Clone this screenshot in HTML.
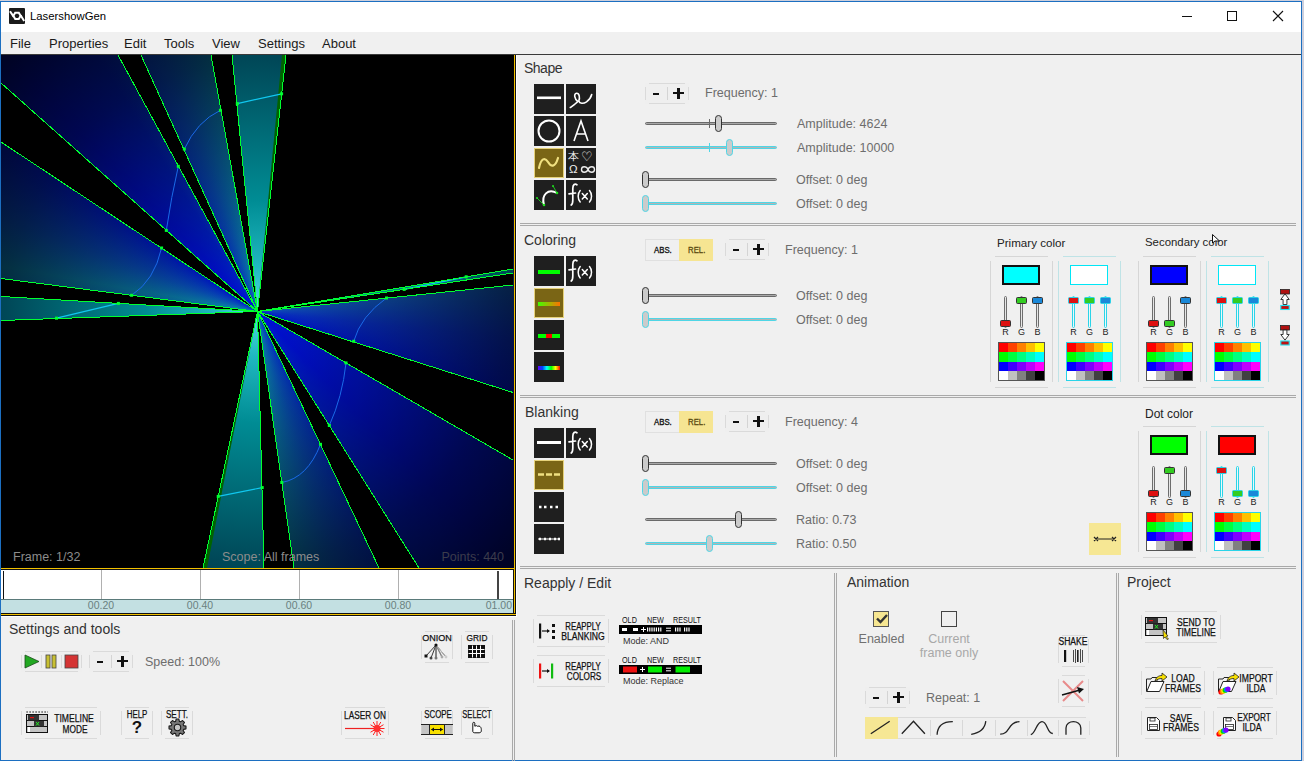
<!DOCTYPE html>
<html><head><meta charset="utf-8">
<style>
html,body{margin:0;padding:0;}
body{width:1304px;height:761px;position:relative;overflow:hidden;background:#cdcfdc;font-family:"Liberation Sans",sans-serif;color:#222;}
div,span{position:absolute;box-sizing:border-box;}
.t{white-space:nowrap;line-height:1;}
.win{left:0;top:1px;width:1302px;height:760px;border:1px solid #1c6fc1;background:#f0f0f0;}
.title{left:1px;top:2px;width:1300px;height:30px;background:#fff;}
.menu{left:1px;top:32px;width:1300px;height:22px;background:#f0f0f0;}
.mi{top:37px;font-size:13px;color:#1a1a1a;}
.sep2{height:3px;border-top:1px solid #a9a9a9;border-bottom:1px solid #a9a9a9;}
.vsep2{width:3px;border-left:1px solid #a9a9a9;border-right:1px solid #a9a9a9;}
.sect{font-size:14px;color:#333;}
.lbl{font-size:12.5px;color:#6a6a6a;}
</style></head><body>
<div class="win"></div>
<div class="title"></div>
<!-- app icon -->
<div style="left:9px;top:8px;width:16px;height:16px;background:#1a1a1a;border-radius:1px;"></div>
<svg style="position:absolute;left:9px;top:8px" width="16" height="16" viewBox="0 0 16 16"><path d="M1 3.3 L4.6 8.6 M11.6 7.2 L15.2 13" stroke="#fff" stroke-width="2" fill="none"/><polygon points="11.60,7.80 9.80,10.92 6.20,10.92 4.40,7.80 6.20,4.68 9.80,4.68" stroke="#fff" stroke-width="2" fill="none"/></svg>
<div class="t" style="left:30px;top:11px;font-size:11.3px;color:#000;">LasershowGen</div>
<!-- window controls -->
<div style="left:1182px;top:16px;width:10px;height:1px;background:#111;"></div>
<div style="left:1227px;top:11px;width:10px;height:10px;border:1px solid #111;"></div>
<svg style="position:absolute;left:1272px;top:10px" width="12" height="12" viewBox="0 0 12 12"><path d="M1 1 L11 11 M11 1 L1 11" stroke="#111" stroke-width="1.1"/></svg>
<div class="menu"></div>
<div class="t mi" style="left:10px;">File</div>
<div class="t mi" style="left:49px;">Properties</div>
<div class="t mi" style="left:124px;">Edit</div>
<div class="t mi" style="left:164px;">Tools</div>
<div class="t mi" style="left:212px;">View</div>
<div class="t mi" style="left:258px;">Settings</div>
<div class="t mi" style="left:322px;">About</div>
<div style="left:1px;top:54px;width:1300px;height:1px;background:#3a3a3a;"></div>
<!-- CANVAS -->
<!--canvas-->
<!-- orange frame -->
<div style="left:514px;top:55px;width:1px;height:560px;background:#f2c100;"></div>
<div style="left:515px;top:55px;width:1px;height:560px;background:#111;"></div>
<div style="left:1px;top:568px;width:514px;height:1px;background:#f2c100;"></div>
<!-- timeline -->
<div style="left:1px;top:569px;width:512px;height:30px;background:#fff;border-top:1px solid #111;"></div>
<div style="left:1px;top:599px;width:512px;height:14px;background:#c3e0e2;border-top:1px solid #5a7a7a;"></div>
<div style="left:513px;top:569px;width:1px;height:45px;background:#111;"></div>
<div style="left:1px;top:613px;width:514px;height:1px;background:#111;"></div>
<div style="left:1px;top:614px;width:515px;height:1px;background:#f2c100;"></div>
<div style="left:1px;top:615px;width:515px;height:1px;background:#111;"></div>
<div style="left:1px;top:616px;width:516px;height:1px;background:#fff;"></div>
<div style="left:516px;top:55px;width:1px;height:562px;background:#fff;"></div>


<div style="left:1px;top:55px;width:513px;height:513px;background:#000;overflow:hidden;">
<div style="left:0;top:0;width:513px;height:513px;background:radial-gradient(circle at 256.5px 256.5px, rgba(0,0,0,0) 0px, rgba(0,0,0,0.1) 50px, rgba(0,0,0,0.3) 130px, rgba(0,0,0,0.62) 250px, rgba(0,0,0,0.86) 370px),conic-gradient(from 0deg at 256.5px 256.5px, #00a0b8 0deg, #0a80b0 10deg, #0850c0 20deg, #0020d0 32deg, #0010d8 45deg, #0020d0 70deg, #1058b8 84deg, #0830c8 96deg, #0018d0 108deg, #0010d8 135deg, #0020d0 150deg, #0850c0 162deg, #0a80b0 172deg, #00a0b8 180deg, #0a80b0 190deg, #0850c0 200deg, #0020d0 212deg, #0010d8 225deg, #0020d0 250deg, #0850c0 262deg, #0a80b0 280deg, #0850c0 290deg, #0020d0 302deg, #0010d8 315deg, #0020d0 328deg, #0850c0 340deg, #0a80b0 350deg, #00a0b8 360deg);"></div>
<svg style="position:absolute;left:0;top:0" width="513" height="513" viewBox="1 55 513 513">
<polygon points="257.5,311.5 1,142 1,83" fill="#000"/>
<polygon points="257.5,311.5 118,55 141,55" fill="#000"/>
<polygon points="257.5,311.5 211,55 232,55" fill="#000"/>
<polygon points="257.5,311.5 286,55 514,54 513,269" fill="#000"/>
<polygon points="257.5,311.5 513,273 513,285" fill="#000"/>
<polygon points="257.5,311.5 513,392.5 513,460" fill="#000"/>
<polygon points="257.5,311.5 419,568 379,568" fill="#000"/>
<polygon points="257.5,311.5 294,568 264,568" fill="#000"/>
<polygon points="257.5,311.5 203,568 0,569 1,320.5" fill="#000"/>
<polygon points="257.5,311.5 1,296.5 1,278.5" fill="#000"/>
<defs><radialGradient id="tg" gradientUnits="userSpaceOnUse" cx="257.5" cy="311.5" r="370"><stop offset="0" stop-color="#50e0e0"/><stop offset="0.12" stop-color="#20b8c0"/><stop offset="0.3" stop-color="#008c94"/><stop offset="0.68" stop-color="#004858"/><stop offset="1" stop-color="#002a38"/></radialGradient></defs>
<polygon points="257.5,311.5 232,55 286,55" fill="url(#tg)"/>
<polygon points="257.5,311.5 513,269 513,273" fill="url(#tg)"/>
<polygon points="257.5,311.5 264,568 203,568" fill="url(#tg)"/>
<polygon points="257.5,311.5 1,320.5 1,296.5" fill="url(#tg)"/>
<polygon points="257.5,311.5 282,55 286,55" fill="#006400"/>
<polygon points="257.5,311.5 203,568 207,568" fill="#006400"/>
<path d="M220.4,110.3 Q197.0,121.3 184.3,149.1" stroke="#1a6ae8" stroke-width="1" fill="none"/>
<path d="M178.3,166.3 Q171.3,196.6 166.3,230.4" stroke="#1a6ae8" stroke-width="1" fill="none"/>
<path d="M161.6,248 Q154.4,280.4 131.6,295.3" stroke="#1a6ae8" stroke-width="1" fill="none"/>
<path d="M386.5,298 Q360.9,316.0 353.7,341.3" stroke="#1a6ae8" stroke-width="1" fill="none"/>
<path d="M346,362.9 Q342.4,396.8 329.3,425.5" stroke="#1a6ae8" stroke-width="1" fill="none"/>
<path d="M320.5,444.3 Q307.6,477.8 281.8,482.5" stroke="#1a6ae8" stroke-width="1" fill="none"/>
<line x1="281.6" y1="93.8" x2="237.3" y2="103.6" stroke="#10c8f0" stroke-width="1.2"/>
<line x1="118.4" y1="303.4" x2="56.5" y2="318.2" stroke="#10c8f0" stroke-width="1.2"/>
<line x1="262.2" y1="487.6" x2="218.2" y2="496.4" stroke="#10c8f0" stroke-width="1.2"/>
<line x1="404.2" y1="289.4" x2="466.2" y2="276.8" stroke="#10c8f0" stroke-width="1.2"/>
<line x1="257.5" y1="311.5" x2="1" y2="83" stroke="#00ff30" stroke-width="1" shape-rendering="crispEdges"/>
<line x1="257.5" y1="311.5" x2="118" y2="55" stroke="#00ff30" stroke-width="1" shape-rendering="crispEdges"/>
<line x1="257.5" y1="311.5" x2="141" y2="55" stroke="#00ff30" stroke-width="1" shape-rendering="crispEdges"/>
<line x1="257.5" y1="311.5" x2="211" y2="55" stroke="#00ff30" stroke-width="1" shape-rendering="crispEdges"/>
<line x1="257.5" y1="311.5" x2="232" y2="55" stroke="#00ff30" stroke-width="1" shape-rendering="crispEdges"/>
<line x1="257.5" y1="311.5" x2="286" y2="55" stroke="#00ff30" stroke-width="1" shape-rendering="crispEdges"/>
<line x1="257.5" y1="311.5" x2="513" y2="269" stroke="#00ff30" stroke-width="1" shape-rendering="crispEdges"/>
<line x1="257.5" y1="311.5" x2="513" y2="273" stroke="#00ff30" stroke-width="1" shape-rendering="crispEdges"/>
<line x1="257.5" y1="311.5" x2="513" y2="285" stroke="#00ff30" stroke-width="1" shape-rendering="crispEdges"/>
<line x1="257.5" y1="311.5" x2="513" y2="392.5" stroke="#00ff30" stroke-width="1" shape-rendering="crispEdges"/>
<line x1="257.5" y1="311.5" x2="513" y2="460" stroke="#00ff30" stroke-width="1" shape-rendering="crispEdges"/>
<line x1="257.5" y1="311.5" x2="419" y2="568" stroke="#00ff30" stroke-width="1" shape-rendering="crispEdges"/>
<line x1="257.5" y1="311.5" x2="379" y2="568" stroke="#00ff30" stroke-width="1" shape-rendering="crispEdges"/>
<line x1="257.5" y1="311.5" x2="294" y2="568" stroke="#00ff30" stroke-width="1" shape-rendering="crispEdges"/>
<line x1="257.5" y1="311.5" x2="264" y2="568" stroke="#00ff30" stroke-width="1" shape-rendering="crispEdges"/>
<line x1="257.5" y1="311.5" x2="203" y2="568" stroke="#00ff30" stroke-width="1" shape-rendering="crispEdges"/>
<line x1="257.5" y1="311.5" x2="1" y2="320.5" stroke="#00ff30" stroke-width="1" shape-rendering="crispEdges"/>
<line x1="257.5" y1="311.5" x2="1" y2="296.5" stroke="#00ff30" stroke-width="1" shape-rendering="crispEdges"/>
<line x1="257.5" y1="311.5" x2="1" y2="278.5" stroke="#00ff30" stroke-width="1" shape-rendering="crispEdges"/>
<line x1="257.5" y1="311.5" x2="1" y2="142" stroke="#00ff30" stroke-width="1" shape-rendering="crispEdges"/>
<rect x="280.1" y="92.3" width="3" height="3" fill="#00ff30"/>
<rect x="235.8" y="102.1" width="3" height="3" fill="#00ff30"/>
<rect x="218.9" y="108.8" width="3" height="3" fill="#00ff30"/>
<rect x="182.8" y="147.6" width="3" height="3" fill="#00ff30"/>
<rect x="176.8" y="164.8" width="3" height="3" fill="#00ff30"/>
<rect x="164.8" y="228.9" width="3" height="3" fill="#00ff30"/>
<rect x="160.1" y="246.5" width="3" height="3" fill="#00ff30"/>
<rect x="130.1" y="293.8" width="3" height="3" fill="#00ff30"/>
<rect x="116.9" y="301.9" width="3" height="3" fill="#00ff30"/>
<rect x="55.0" y="316.7" width="3" height="3" fill="#00ff30"/>
<rect x="385.0" y="296.5" width="3" height="3" fill="#00ff30"/>
<rect x="352.2" y="339.8" width="3" height="3" fill="#00ff30"/>
<rect x="344.5" y="361.4" width="3" height="3" fill="#00ff30"/>
<rect x="327.8" y="424.0" width="3" height="3" fill="#00ff30"/>
<rect x="319.0" y="442.8" width="3" height="3" fill="#00ff30"/>
<rect x="280.3" y="481.0" width="3" height="3" fill="#00ff30"/>
<rect x="260.7" y="486.1" width="3" height="3" fill="#00ff30"/>
<rect x="216.7" y="494.9" width="3" height="3" fill="#00ff30"/>
<rect x="402.7" y="287.9" width="3" height="3" fill="#00ff30"/>
<rect x="464.7" y="275.3" width="3" height="3" fill="#00ff30"/>
</svg></div>
<div style="left:516px;top:55px;width:1px;height:512px;background:#fff;"></div>
<div style="left:520px;top:223px;width:776px;height:1px;background:#a9a9a9;"></div>
<div style="left:520px;top:225px;width:776px;height:1px;background:#a9a9a9;"></div>
<div style="left:520px;top:395px;width:776px;height:1px;background:#a9a9a9;"></div>
<div style="left:520px;top:397px;width:776px;height:1px;background:#a9a9a9;"></div>
<div style="left:520px;top:566px;width:776px;height:1px;background:#a9a9a9;"></div>
<div style="left:520px;top:568px;width:776px;height:1px;background:#a9a9a9;"></div>
<div style="left:512px;top:620px;width:1px;height:184px;background:#a9a9a9;"></div>
<div style="left:514px;top:620px;width:1px;height:184px;background:#a9a9a9;"></div>
<div style="left:834px;top:573px;width:1px;height:184px;background:#a9a9a9;"></div>
<div style="left:836px;top:573px;width:1px;height:184px;background:#a9a9a9;"></div>
<div style="left:1116px;top:573px;width:1px;height:184px;background:#a9a9a9;"></div>
<div style="left:1118px;top:573px;width:1px;height:184px;background:#a9a9a9;"></div>
<div class="t" style="left:524px;top:60.76px;font-size:14px;color:#333;letter-spacing:-0.5px;">Shape</div>
<div class="t" style="left:524px;top:232.76px;font-size:14px;color:#333;">Coloring</div>
<div class="t" style="left:525px;top:404.76px;font-size:14px;color:#333;">Blanking</div>
<div class="t" style="left:524px;top:575.76px;font-size:14px;color:#333;">Reapply / Edit</div>
<div class="t" style="left:847px;top:574.76px;font-size:14px;color:#333;">Animation</div>
<div class="t" style="left:1127px;top:574.76px;font-size:14px;color:#333;">Project</div>
<div class="t" style="left:9px;top:622.26px;font-size:14px;color:#333;">Settings and tools</div>
<div style="left:534px;top:84px;width:30px;height:30px;background:#1f1f1f;"><svg style="position:absolute;left:0px;top:0px" width="30" height="30" viewBox="0 0 30 30"><rect x="3" y="12.5" width="24" height="2.6" fill="#fff"/></svg></div>
<div style="left:566px;top:84px;width:30px;height:30px;background:#1f1f1f;"><svg style="position:absolute;left:0px;top:0px" width="30" height="30" viewBox="0 0 30 30"><path d="M4.3 23.5 C7 21.5 10 19.5 11.8 17.5 C8.5 15 7.5 9.5 10.5 9.3 C13.5 9.1 14 14 12.8 17 C13.5 19.8 17.5 19.8 20.5 17.8 C23 16 25 13.5 25.7 10.5" stroke="#fff" stroke-width="1.6" fill="none" stroke-linecap="round"/></svg></div>
<div style="left:534px;top:116px;width:30px;height:30px;background:#1f1f1f;"><svg style="position:absolute;left:0px;top:0px" width="30" height="30" viewBox="0 0 30 30"><circle cx="15" cy="15" r="10.5" stroke="#fff" stroke-width="2" fill="none"/></svg></div>
<div style="left:566px;top:116px;width:30px;height:30px;background:#1f1f1f;"><svg style="position:absolute;left:0px;top:0px" width="30" height="30" viewBox="0 0 30 30"><path d="M8 25 L15 5 L22 25 M10.5 18 L19.5 18" stroke="#fff" stroke-width="1.6" fill="none"/></svg></div>
<div style="left:534px;top:148px;width:30px;height:30px;background:#7a6515;border:1px solid #e6d27a;"><svg style="position:absolute;left:0px;top:0px" width="28" height="28" viewBox="0 0 28 28"><path d="M4 19 C6 9 10 8 13 13 C16 18 20 19 23 9" stroke="#f0e080" stroke-width="2.2" fill="none" stroke-linecap="round"/></svg></div>
<div style="left:566px;top:148px;width:30px;height:30px;background:#1f1f1f;"><div class="t" style="left:2px;top:2.5px;font-size:11px;color:#eee;">本</div><div class="t" style="left:15px;top:2px;font-size:13px;color:#eee;">♡</div><div class="t" style="left:3px;top:16px;font-size:11.5px;color:#eee;">Ω</div><svg style="position:absolute;left:0;top:0" width="30" height="30"><path d="M15.5 21.5 C15.5 17.8 20.5 17.8 22 21.5 C23.5 25.2 28.5 25.2 28.5 21.5 C28.5 17.8 23.5 17.8 22 21.5 C20.5 25.2 15.5 25.2 15.5 21.5 Z" stroke="#eee" stroke-width="1.4" fill="none"/></svg></div>
<div style="left:534px;top:180px;width:30px;height:30px;background:#1f1f1f;"><svg style="position:absolute;left:0px;top:0px" width="30" height="30" viewBox="0 0 30 30"><path d="M10 25 C7 15 14 8 23 13" stroke="#fff" stroke-width="2" fill="none"/><path d="M3 18 L10 25 M19 6 L23 13" stroke="#1ec01e" stroke-width="1"/><circle cx="10" cy="25" r="1.3" fill="#1ee01e"/><circle cx="23" cy="13" r="1.3" fill="#1ee01e"/><circle cx="3" cy="18" r="1" fill="#1ee01e"/><circle cx="19" cy="6" r="1" fill="#1ee01e"/></svg></div>
<div style="left:566px;top:180px;width:30px;height:30px;background:#1f1f1f;"><svg style="position:absolute;left:0px;top:0px" width="30" height="30" viewBox="0 0 30 30"><path d="M11 4.8 C9 3 6.8 4.5 6.8 8.5 L6.8 20 C6.8 23 6 24.5 5.2 25 M3 13.8 L9.5 13" stroke="#fff" stroke-width="1.7" fill="none" stroke-linecap="round"/><path d="M14.2 10.5 C11.5 13.5 11.5 19 14.2 22 M23.5 10.5 C26.2 13.5 26.2 19 23.5 22 M16.3 13.5 L21.3 19 M21.3 13.5 L16.3 19" stroke="#fff" stroke-width="1.5" fill="none" stroke-linecap="round"/></svg></div>
<div style="left:534px;top:256px;width:30px;height:30px;background:#1f1f1f;"><div style="left:4px;top:14px;width:22px;height:4px;background:#00ff00;"></div></div>
<div style="left:566px;top:256px;width:30px;height:30px;background:#1f1f1f;"><svg style="position:absolute;left:0px;top:0px" width="30" height="30" viewBox="0 0 30 30"><path d="M11 4.8 C9 3 6.8 4.5 6.8 8.5 L6.8 20 C6.8 23 6 24.5 5.2 25 M3 13.8 L9.5 13" stroke="#fff" stroke-width="1.7" fill="none" stroke-linecap="round"/><path d="M14.2 10.5 C11.5 13.5 11.5 19 14.2 22 M23.5 10.5 C26.2 13.5 26.2 19 23.5 22 M16.3 13.5 L21.3 19 M21.3 13.5 L16.3 19" stroke="#fff" stroke-width="1.5" fill="none" stroke-linecap="round"/></svg></div>
<div style="left:534px;top:288px;width:30px;height:30px;background:#7a6515;border:1px solid #e6d27a;"><div style="left:3px;top:13px;width:22px;height:4px;background:linear-gradient(90deg,#40ff00,#ff7000);"></div></div>
<div style="left:534px;top:320px;width:30px;height:30px;background:#1f1f1f;"><div style="left:4px;top:14px;width:22px;height:4px;background:linear-gradient(90deg,#00ff00 0 36%,#ff0000 36% 64%,#00ff00 64%);"></div></div>
<div style="left:534px;top:352px;width:30px;height:30px;background:#1f1f1f;"><div style="left:4px;top:14px;width:22px;height:4px;background:linear-gradient(90deg,#6000ff,#0040ff,#00ffff,#00ff00,#ffff00,#ff0000);"></div></div>
<div style="left:534px;top:428px;width:30px;height:30px;background:#1f1f1f;"><div style="left:3px;top:13px;width:24px;height:3px;background:#fff;"></div></div>
<div style="left:566px;top:428px;width:30px;height:30px;background:#1f1f1f;"><svg style="position:absolute;left:0px;top:0px" width="30" height="30" viewBox="0 0 30 30"><path d="M11 4.8 C9 3 6.8 4.5 6.8 8.5 L6.8 20 C6.8 23 6 24.5 5.2 25 M3 13.8 L9.5 13" stroke="#fff" stroke-width="1.7" fill="none" stroke-linecap="round"/><path d="M14.2 10.5 C11.5 13.5 11.5 19 14.2 22 M23.5 10.5 C26.2 13.5 26.2 19 23.5 22 M16.3 13.5 L21.3 19 M21.3 13.5 L16.3 19" stroke="#fff" stroke-width="1.5" fill="none" stroke-linecap="round"/></svg></div>
<div style="left:534px;top:460px;width:30px;height:30px;background:#7a6515;border:1px solid #e6d27a;"><svg style="position:absolute;left:0px;top:0px" width="28" height="28" viewBox="0 0 28 28"><path d="M3 13.5 L9 13.5 M11 13.5 L17 13.5 M19 13.5 L25 13.5" stroke="#f0e080" stroke-width="2.6"/></svg></div>
<div style="left:534px;top:492px;width:30px;height:30px;background:#1f1f1f;"><svg style="position:absolute;left:0px;top:0px" width="30" height="30" viewBox="0 0 30 30"><path d="M5 15 L7.5 15 M10 15 L12.5 15 M16 15 L18.5 15 M21.5 15 L24 15" stroke="#fff" stroke-width="2.4"/></svg></div>
<div style="left:534px;top:524px;width:30px;height:30px;background:#1f1f1f;"><svg style="position:absolute;left:0px;top:0px" width="30" height="30" viewBox="0 0 30 30"><path d="M4 15 L26 15" stroke="#fff" stroke-width="1"/><path d="M5 15 L7 15 M10 15 L12 15 M15 15 L17 15 M20 15 L22 15 M24 15 L26 15" stroke="#fff" stroke-width="2.6"/></svg></div>
<div style="left:645px;top:122px;width:132px;height:3px;background:#a8a8a8;border:1px solid #6a6a6a;border-radius:1.5px;"></div>
<div style="left:709px;top:119px;width:1px;height:9px;background:#6a6a6a;"></div>
<div style="left:715px;top:115px;width:7px;height:17px;background:#cbcbcb;border:1px solid #333;border-radius:3.5px;"></div>
<div style="left:645px;top:146px;width:132px;height:3px;background:#b4b4b4;border:1px solid #4fd6e6;border-radius:1.5px;"></div>
<div style="left:709px;top:143px;width:1px;height:9px;background:#4fd6e6;"></div>
<div style="left:726px;top:139px;width:7px;height:17px;background:#cbcbcb;border:1px solid #4fd6e6;border-radius:3.5px;"></div>
<div style="left:645px;top:178px;width:132px;height:3px;background:#a8a8a8;border:1px solid #6a6a6a;border-radius:1.5px;"></div>
<div style="left:642px;top:171px;width:7px;height:17px;background:#cbcbcb;border:1px solid #333;border-radius:3.5px;"></div>
<div style="left:645px;top:202px;width:132px;height:3px;background:#b4b4b4;border:1px solid #4fd6e6;border-radius:1.5px;"></div>
<div style="left:642px;top:195px;width:7px;height:17px;background:#cbcbcb;border:1px solid #4fd6e6;border-radius:3.5px;"></div>
<div style="left:645px;top:294px;width:132px;height:3px;background:#a8a8a8;border:1px solid #6a6a6a;border-radius:1.5px;"></div>
<div style="left:642px;top:287px;width:7px;height:17px;background:#cbcbcb;border:1px solid #333;border-radius:3.5px;"></div>
<div style="left:645px;top:318px;width:132px;height:3px;background:#b4b4b4;border:1px solid #4fd6e6;border-radius:1.5px;"></div>
<div style="left:642px;top:311px;width:7px;height:17px;background:#cbcbcb;border:1px solid #4fd6e6;border-radius:3.5px;"></div>
<div style="left:645px;top:462px;width:132px;height:3px;background:#a8a8a8;border:1px solid #6a6a6a;border-radius:1.5px;"></div>
<div style="left:642px;top:455px;width:7px;height:17px;background:#cbcbcb;border:1px solid #333;border-radius:3.5px;"></div>
<div style="left:645px;top:486px;width:132px;height:3px;background:#b4b4b4;border:1px solid #4fd6e6;border-radius:1.5px;"></div>
<div style="left:642px;top:479px;width:7px;height:17px;background:#cbcbcb;border:1px solid #4fd6e6;border-radius:3.5px;"></div>
<div style="left:645px;top:518px;width:132px;height:3px;background:#a8a8a8;border:1px solid #6a6a6a;border-radius:1.5px;"></div>
<div style="left:735px;top:511px;width:7px;height:17px;background:#cbcbcb;border:1px solid #333;border-radius:3.5px;"></div>
<div style="left:645px;top:542px;width:132px;height:3px;background:#b4b4b4;border:1px solid #4fd6e6;border-radius:1.5px;"></div>
<div style="left:706px;top:535px;width:7px;height:17px;background:#cbcbcb;border:1px solid #4fd6e6;border-radius:3.5px;"></div>
<div class="t" style="left:705px;top:86.53px;font-size:12.5px;color:#6d6d6d;">Frequency: 1</div>
<div class="t" style="left:797px;top:117.53px;font-size:12.5px;color:#6d6d6d;">Amplitude: 4624</div>
<div class="t" style="left:797px;top:141.53px;font-size:12.5px;color:#6d6d6d;">Amplitude: 10000</div>
<div class="t" style="left:796px;top:173.53px;font-size:12.5px;color:#6d6d6d;">Offset: 0 deg</div>
<div class="t" style="left:796px;top:197.53px;font-size:12.5px;color:#6d6d6d;">Offset: 0 deg</div>
<div class="t" style="left:785px;top:243.53px;font-size:12.5px;color:#6d6d6d;">Frequency: 1</div>
<div class="t" style="left:796px;top:289.52px;font-size:12.5px;color:#6d6d6d;">Offset: 0 deg</div>
<div class="t" style="left:796px;top:313.52px;font-size:12.5px;color:#6d6d6d;">Offset: 0 deg</div>
<div class="t" style="left:785px;top:415.52px;font-size:12.5px;color:#6d6d6d;">Frequency: 4</div>
<div class="t" style="left:796px;top:457.52px;font-size:12.5px;color:#6d6d6d;">Offset: 0 deg</div>
<div class="t" style="left:796px;top:481.52px;font-size:12.5px;color:#6d6d6d;">Offset: 0 deg</div>
<div class="t" style="left:796px;top:513.52px;font-size:12.5px;color:#6d6d6d;">Ratio: 0.73</div>
<div class="t" style="left:796px;top:537.52px;font-size:12.5px;color:#6d6d6d;">Ratio: 0.50</div>
<div style="left:645px;top:83px;width:44px;height:21px;background:#efefef;"><div style="left:4px;top:0;width:36px;height:1px;background:#dadada;"></div><div style="left:4px;top:20px;width:36px;height:1px;background:#dadada;"></div><div style="left:0;top:4px;width:1px;height:13px;background:#dadada;"></div><div style="left:43px;top:4px;width:1px;height:13px;background:#dadada;"></div><div style="left:22px;top:4px;width:1px;height:13px;background:#d4d4d4;"></div><div style="left:8px;top:9.5px;width:6px;height:2px;background:#111;"></div><div style="left:28px;top:9px;width:11px;height:2.2px;background:#111;"></div><div style="left:32.4px;top:5px;width:2.2px;height:11px;background:#111;"></div></div>
<div style="left:725px;top:239px;width:44px;height:21px;background:#efefef;"><div style="left:4px;top:0;width:36px;height:1px;background:#dadada;"></div><div style="left:4px;top:20px;width:36px;height:1px;background:#dadada;"></div><div style="left:0;top:4px;width:1px;height:13px;background:#dadada;"></div><div style="left:43px;top:4px;width:1px;height:13px;background:#dadada;"></div><div style="left:22px;top:4px;width:1px;height:13px;background:#d4d4d4;"></div><div style="left:8px;top:9.5px;width:6px;height:2px;background:#111;"></div><div style="left:28px;top:9px;width:11px;height:2.2px;background:#111;"></div><div style="left:32.4px;top:5px;width:2.2px;height:11px;background:#111;"></div></div>
<div style="left:725px;top:411px;width:44px;height:21px;background:#efefef;"><div style="left:4px;top:0;width:36px;height:1px;background:#dadada;"></div><div style="left:4px;top:20px;width:36px;height:1px;background:#dadada;"></div><div style="left:0;top:4px;width:1px;height:13px;background:#dadada;"></div><div style="left:43px;top:4px;width:1px;height:13px;background:#dadada;"></div><div style="left:22px;top:4px;width:1px;height:13px;background:#d4d4d4;"></div><div style="left:8px;top:9.5px;width:6px;height:2px;background:#111;"></div><div style="left:28px;top:9px;width:11px;height:2.2px;background:#111;"></div><div style="left:32.4px;top:5px;width:2.2px;height:11px;background:#111;"></div></div>
<div style="left:645px;top:239px;width:68px;height:22px;"><div style="left:0;top:0;width:34px;height:22px;border:1px solid #e0e0e0;border-right:none;"></div><div style="left:34px;top:0;width:34px;height:22px;background:#f6e592;"></div><div class="t" style="left:8.5px;top:5.5px;font-size:9.5px;color:#111;transform:scaleX(0.82);transform-origin:0 0;-webkit-text-stroke:0.35px #111;">ABS.</div><div class="t" style="left:42.5px;top:5.5px;font-size:9.5px;color:#5a4a10;transform:scaleX(0.82);transform-origin:0 0;-webkit-text-stroke:0.3px #5a4a10;">REL.</div></div>
<div style="left:645px;top:411px;width:68px;height:22px;"><div style="left:0;top:0;width:34px;height:22px;border:1px solid #e0e0e0;border-right:none;"></div><div style="left:34px;top:0;width:34px;height:22px;background:#f6e592;"></div><div class="t" style="left:8.5px;top:5.5px;font-size:9.5px;color:#111;transform:scaleX(0.82);transform-origin:0 0;-webkit-text-stroke:0.35px #111;">ABS.</div><div class="t" style="left:42.5px;top:5.5px;font-size:9.5px;color:#5a4a10;transform:scaleX(0.82);transform-origin:0 0;-webkit-text-stroke:0.3px #5a4a10;">REL.</div></div>
<div class="t" style="left:997px;top:237.02px;font-size:11.6px;color:#222;">Primary color</div>
<div class="t" style="left:1145px;top:237.13px;font-size:11.4px;color:#222;">Secondary color</div>
<div class="t" style="left:1145px;top:407.80px;font-size:12px;color:#222;">Dot color</div>
<div style="left:995px;top:256px;width:53px;height:1px;background:#d6d6d6;"></div>
<div style="left:995px;top:387px;width:53px;height:1px;background:#d6d6d6;"></div>
<div style="left:990px;top:261px;width:1px;height:121px;background:#d6d6d6;"></div>
<div style="left:1052px;top:261px;width:1px;height:121px;background:#d6d6d6;"></div>
<div style="left:1002px;top:265px;width:38px;height:20px;background:#00ffff;border:2px solid #111;"></div>
<div style="left:1004px;top:296px;width:3px;height:32px;background:#e6e6e6;border:1px solid #6e6e6e;border-radius:1.5px;"></div>
<div style="left:999.5px;top:320px;width:11px;height:6.5px;background:#dd1111;border:1px solid #333;border-radius:1.5px;"></div>
<div class="t" style="left:905.5px;width:200px;text-align:center;top:328.45px;font-size:9px;color:#222;">R</div>
<div style="left:1020px;top:296px;width:3px;height:32px;background:#e6e6e6;border:1px solid #6e6e6e;border-radius:1.5px;"></div>
<div style="left:1015.5px;top:297px;width:11px;height:6.5px;background:#33cc22;border:1px solid #333;border-radius:1.5px;"></div>
<div class="t" style="left:921.5px;width:200px;text-align:center;top:328.45px;font-size:9px;color:#222;">G</div>
<div style="left:1036px;top:296px;width:3px;height:32px;background:#e6e6e6;border:1px solid #6e6e6e;border-radius:1.5px;"></div>
<div style="left:1031.5px;top:297px;width:11px;height:6.5px;background:#1a88d8;border:1px solid #333;border-radius:1.5px;"></div>
<div class="t" style="left:937.5px;width:200px;text-align:center;top:328.45px;font-size:9px;color:#222;">B</div>
<div style="left:998px;top:342px;width:47px;height:39px;border:1px solid #555;"><div style="left:0;top:0;width:45px;height:37px;overflow:hidden;"><div style="left:0px;top:0.00px;width:9px;height:9.3px;background:#ff0000;"></div><div style="left:9px;top:0.00px;width:9px;height:9.3px;background:#ff4000;"></div><div style="left:18px;top:0.00px;width:9px;height:9.3px;background:#ff8000;"></div><div style="left:27px;top:0.00px;width:9px;height:9.3px;background:#ffc000;"></div><div style="left:36px;top:0.00px;width:9px;height:9.3px;background:#ffff00;"></div><div style="left:0px;top:9.25px;width:9px;height:9.3px;background:#00ff00;"></div><div style="left:9px;top:9.25px;width:9px;height:9.3px;background:#00ff40;"></div><div style="left:18px;top:9.25px;width:9px;height:9.3px;background:#00ff80;"></div><div style="left:27px;top:9.25px;width:9px;height:9.3px;background:#00ffc0;"></div><div style="left:36px;top:9.25px;width:9px;height:9.3px;background:#00ffff;"></div><div style="left:0px;top:18.50px;width:9px;height:9.3px;background:#0000ff;"></div><div style="left:9px;top:18.50px;width:9px;height:9.3px;background:#4000ff;"></div><div style="left:18px;top:18.50px;width:9px;height:9.3px;background:#8000ff;"></div><div style="left:27px;top:18.50px;width:9px;height:9.3px;background:#c000ff;"></div><div style="left:36px;top:18.50px;width:9px;height:9.3px;background:#ff00ff;"></div><div style="left:0px;top:27.75px;width:9px;height:9.3px;background:#ffffff;"></div><div style="left:9px;top:27.75px;width:9px;height:9.3px;background:#c0c0c0;"></div><div style="left:18px;top:27.75px;width:9px;height:9.3px;background:#808080;"></div><div style="left:27px;top:27.75px;width:9px;height:9.3px;background:#404040;"></div><div style="left:36px;top:27.75px;width:9px;height:9.3px;background:#000000;"></div></div></div>
<div style="left:1063px;top:256px;width:53px;height:1px;background:#bfe3e6;"></div>
<div style="left:1063px;top:387px;width:53px;height:1px;background:#bfe3e6;"></div>
<div style="left:1058px;top:261px;width:1px;height:121px;background:#bfe3e6;"></div>
<div style="left:1120px;top:261px;width:1px;height:121px;background:#bfe3e6;"></div>
<div style="left:1070px;top:265px;width:38px;height:20px;background:#ffffff;border:1.5px solid #00e6f6;"></div>
<div style="left:1072px;top:296px;width:3px;height:32px;background:#eaf8fa;border:1px solid #2ad4e8;border-radius:1.5px;"></div>
<div style="left:1067.5px;top:297px;width:11px;height:6.5px;background:#dd1111;border:1px solid #2ad4e8;border-radius:1.5px;"></div>
<div class="t" style="left:973.5px;width:200px;text-align:center;top:328.45px;font-size:9px;color:#222;">R</div>
<div style="left:1088px;top:296px;width:3px;height:32px;background:#eaf8fa;border:1px solid #2ad4e8;border-radius:1.5px;"></div>
<div style="left:1083.5px;top:297px;width:11px;height:6.5px;background:#33cc22;border:1px solid #2ad4e8;border-radius:1.5px;"></div>
<div class="t" style="left:989.5px;width:200px;text-align:center;top:328.45px;font-size:9px;color:#222;">G</div>
<div style="left:1104px;top:296px;width:3px;height:32px;background:#eaf8fa;border:1px solid #2ad4e8;border-radius:1.5px;"></div>
<div style="left:1099.5px;top:297px;width:11px;height:6.5px;background:#1a88d8;border:1px solid #2ad4e8;border-radius:1.5px;"></div>
<div class="t" style="left:1005.5px;width:200px;text-align:center;top:328.45px;font-size:9px;color:#222;">B</div>
<div style="left:1066px;top:342px;width:47px;height:39px;border:1px solid #2ad4e8;"><div style="left:0;top:0;width:45px;height:37px;overflow:hidden;"><div style="left:0px;top:0.00px;width:9px;height:9.3px;background:#ff0000;"></div><div style="left:9px;top:0.00px;width:9px;height:9.3px;background:#ff4000;"></div><div style="left:18px;top:0.00px;width:9px;height:9.3px;background:#ff8000;"></div><div style="left:27px;top:0.00px;width:9px;height:9.3px;background:#ffc000;"></div><div style="left:36px;top:0.00px;width:9px;height:9.3px;background:#ffff00;"></div><div style="left:0px;top:9.25px;width:9px;height:9.3px;background:#00ff00;"></div><div style="left:9px;top:9.25px;width:9px;height:9.3px;background:#00ff40;"></div><div style="left:18px;top:9.25px;width:9px;height:9.3px;background:#00ff80;"></div><div style="left:27px;top:9.25px;width:9px;height:9.3px;background:#00ffc0;"></div><div style="left:36px;top:9.25px;width:9px;height:9.3px;background:#00ffff;"></div><div style="left:0px;top:18.50px;width:9px;height:9.3px;background:#0000ff;"></div><div style="left:9px;top:18.50px;width:9px;height:9.3px;background:#4000ff;"></div><div style="left:18px;top:18.50px;width:9px;height:9.3px;background:#8000ff;"></div><div style="left:27px;top:18.50px;width:9px;height:9.3px;background:#c000ff;"></div><div style="left:36px;top:18.50px;width:9px;height:9.3px;background:#ff00ff;"></div><div style="left:0px;top:27.75px;width:9px;height:9.3px;background:#ffffff;"></div><div style="left:9px;top:27.75px;width:9px;height:9.3px;background:#c0c0c0;"></div><div style="left:18px;top:27.75px;width:9px;height:9.3px;background:#808080;"></div><div style="left:27px;top:27.75px;width:9px;height:9.3px;background:#404040;"></div><div style="left:36px;top:27.75px;width:9px;height:9.3px;background:#000000;"></div></div></div>
<div style="left:1143px;top:256px;width:53px;height:1px;background:#d6d6d6;"></div>
<div style="left:1143px;top:387px;width:53px;height:1px;background:#d6d6d6;"></div>
<div style="left:1138px;top:261px;width:1px;height:121px;background:#d6d6d6;"></div>
<div style="left:1200px;top:261px;width:1px;height:121px;background:#d6d6d6;"></div>
<div style="left:1150px;top:265px;width:38px;height:20px;background:#0000ff;border:2px solid #111;"></div>
<div style="left:1152px;top:296px;width:3px;height:32px;background:#e6e6e6;border:1px solid #6e6e6e;border-radius:1.5px;"></div>
<div style="left:1147.5px;top:320px;width:11px;height:6.5px;background:#dd1111;border:1px solid #333;border-radius:1.5px;"></div>
<div class="t" style="left:1053.5px;width:200px;text-align:center;top:328.45px;font-size:9px;color:#222;">R</div>
<div style="left:1168px;top:296px;width:3px;height:32px;background:#e6e6e6;border:1px solid #6e6e6e;border-radius:1.5px;"></div>
<div style="left:1163.5px;top:320px;width:11px;height:6.5px;background:#33cc22;border:1px solid #333;border-radius:1.5px;"></div>
<div class="t" style="left:1069.5px;width:200px;text-align:center;top:328.45px;font-size:9px;color:#222;">G</div>
<div style="left:1184px;top:296px;width:3px;height:32px;background:#e6e6e6;border:1px solid #6e6e6e;border-radius:1.5px;"></div>
<div style="left:1179.5px;top:297px;width:11px;height:6.5px;background:#1a88d8;border:1px solid #333;border-radius:1.5px;"></div>
<div class="t" style="left:1085.5px;width:200px;text-align:center;top:328.45px;font-size:9px;color:#222;">B</div>
<div style="left:1146px;top:342px;width:47px;height:39px;border:1px solid #555;"><div style="left:0;top:0;width:45px;height:37px;overflow:hidden;"><div style="left:0px;top:0.00px;width:9px;height:9.3px;background:#ff0000;"></div><div style="left:9px;top:0.00px;width:9px;height:9.3px;background:#ff4000;"></div><div style="left:18px;top:0.00px;width:9px;height:9.3px;background:#ff8000;"></div><div style="left:27px;top:0.00px;width:9px;height:9.3px;background:#ffc000;"></div><div style="left:36px;top:0.00px;width:9px;height:9.3px;background:#ffff00;"></div><div style="left:0px;top:9.25px;width:9px;height:9.3px;background:#00ff00;"></div><div style="left:9px;top:9.25px;width:9px;height:9.3px;background:#00ff40;"></div><div style="left:18px;top:9.25px;width:9px;height:9.3px;background:#00ff80;"></div><div style="left:27px;top:9.25px;width:9px;height:9.3px;background:#00ffc0;"></div><div style="left:36px;top:9.25px;width:9px;height:9.3px;background:#00ffff;"></div><div style="left:0px;top:18.50px;width:9px;height:9.3px;background:#0000ff;"></div><div style="left:9px;top:18.50px;width:9px;height:9.3px;background:#4000ff;"></div><div style="left:18px;top:18.50px;width:9px;height:9.3px;background:#8000ff;"></div><div style="left:27px;top:18.50px;width:9px;height:9.3px;background:#c000ff;"></div><div style="left:36px;top:18.50px;width:9px;height:9.3px;background:#ff00ff;"></div><div style="left:0px;top:27.75px;width:9px;height:9.3px;background:#ffffff;"></div><div style="left:9px;top:27.75px;width:9px;height:9.3px;background:#c0c0c0;"></div><div style="left:18px;top:27.75px;width:9px;height:9.3px;background:#808080;"></div><div style="left:27px;top:27.75px;width:9px;height:9.3px;background:#404040;"></div><div style="left:36px;top:27.75px;width:9px;height:9.3px;background:#000000;"></div></div></div>
<div style="left:1211px;top:256px;width:53px;height:1px;background:#bfe3e6;"></div>
<div style="left:1211px;top:387px;width:53px;height:1px;background:#bfe3e6;"></div>
<div style="left:1206px;top:261px;width:1px;height:121px;background:#bfe3e6;"></div>
<div style="left:1268px;top:261px;width:1px;height:121px;background:#bfe3e6;"></div>
<div style="left:1218px;top:265px;width:38px;height:20px;background:#ffffff;border:1.5px solid #00e6f6;"></div>
<div style="left:1220px;top:296px;width:3px;height:32px;background:#eaf8fa;border:1px solid #2ad4e8;border-radius:1.5px;"></div>
<div style="left:1215.5px;top:297px;width:11px;height:6.5px;background:#dd1111;border:1px solid #2ad4e8;border-radius:1.5px;"></div>
<div class="t" style="left:1121.5px;width:200px;text-align:center;top:328.45px;font-size:9px;color:#222;">R</div>
<div style="left:1236px;top:296px;width:3px;height:32px;background:#eaf8fa;border:1px solid #2ad4e8;border-radius:1.5px;"></div>
<div style="left:1231.5px;top:297px;width:11px;height:6.5px;background:#33cc22;border:1px solid #2ad4e8;border-radius:1.5px;"></div>
<div class="t" style="left:1137.5px;width:200px;text-align:center;top:328.45px;font-size:9px;color:#222;">G</div>
<div style="left:1252px;top:296px;width:3px;height:32px;background:#eaf8fa;border:1px solid #2ad4e8;border-radius:1.5px;"></div>
<div style="left:1247.5px;top:297px;width:11px;height:6.5px;background:#1a88d8;border:1px solid #2ad4e8;border-radius:1.5px;"></div>
<div class="t" style="left:1153.5px;width:200px;text-align:center;top:328.45px;font-size:9px;color:#222;">B</div>
<div style="left:1214px;top:342px;width:47px;height:39px;border:1px solid #2ad4e8;"><div style="left:0;top:0;width:45px;height:37px;overflow:hidden;"><div style="left:0px;top:0.00px;width:9px;height:9.3px;background:#ff0000;"></div><div style="left:9px;top:0.00px;width:9px;height:9.3px;background:#ff4000;"></div><div style="left:18px;top:0.00px;width:9px;height:9.3px;background:#ff8000;"></div><div style="left:27px;top:0.00px;width:9px;height:9.3px;background:#ffc000;"></div><div style="left:36px;top:0.00px;width:9px;height:9.3px;background:#ffff00;"></div><div style="left:0px;top:9.25px;width:9px;height:9.3px;background:#00ff00;"></div><div style="left:9px;top:9.25px;width:9px;height:9.3px;background:#00ff40;"></div><div style="left:18px;top:9.25px;width:9px;height:9.3px;background:#00ff80;"></div><div style="left:27px;top:9.25px;width:9px;height:9.3px;background:#00ffc0;"></div><div style="left:36px;top:9.25px;width:9px;height:9.3px;background:#00ffff;"></div><div style="left:0px;top:18.50px;width:9px;height:9.3px;background:#0000ff;"></div><div style="left:9px;top:18.50px;width:9px;height:9.3px;background:#4000ff;"></div><div style="left:18px;top:18.50px;width:9px;height:9.3px;background:#8000ff;"></div><div style="left:27px;top:18.50px;width:9px;height:9.3px;background:#c000ff;"></div><div style="left:36px;top:18.50px;width:9px;height:9.3px;background:#ff00ff;"></div><div style="left:0px;top:27.75px;width:9px;height:9.3px;background:#ffffff;"></div><div style="left:9px;top:27.75px;width:9px;height:9.3px;background:#c0c0c0;"></div><div style="left:18px;top:27.75px;width:9px;height:9.3px;background:#808080;"></div><div style="left:27px;top:27.75px;width:9px;height:9.3px;background:#404040;"></div><div style="left:36px;top:27.75px;width:9px;height:9.3px;background:#000000;"></div></div></div>
<div style="left:1143px;top:426px;width:53px;height:1px;background:#d6d6d6;"></div>
<div style="left:1143px;top:557px;width:53px;height:1px;background:#d6d6d6;"></div>
<div style="left:1138px;top:431px;width:1px;height:121px;background:#d6d6d6;"></div>
<div style="left:1200px;top:431px;width:1px;height:121px;background:#d6d6d6;"></div>
<div style="left:1150px;top:435px;width:38px;height:20px;background:#00ff00;border:2px solid #111;"></div>
<div style="left:1152px;top:466px;width:3px;height:32px;background:#e6e6e6;border:1px solid #6e6e6e;border-radius:1.5px;"></div>
<div style="left:1147.5px;top:490px;width:11px;height:6.5px;background:#dd1111;border:1px solid #333;border-radius:1.5px;"></div>
<div class="t" style="left:1053.5px;width:200px;text-align:center;top:498.45px;font-size:9px;color:#222;">R</div>
<div style="left:1168px;top:466px;width:3px;height:32px;background:#e6e6e6;border:1px solid #6e6e6e;border-radius:1.5px;"></div>
<div style="left:1163.5px;top:467px;width:11px;height:6.5px;background:#33cc22;border:1px solid #333;border-radius:1.5px;"></div>
<div class="t" style="left:1069.5px;width:200px;text-align:center;top:498.45px;font-size:9px;color:#222;">G</div>
<div style="left:1184px;top:466px;width:3px;height:32px;background:#e6e6e6;border:1px solid #6e6e6e;border-radius:1.5px;"></div>
<div style="left:1179.5px;top:490px;width:11px;height:6.5px;background:#1a88d8;border:1px solid #333;border-radius:1.5px;"></div>
<div class="t" style="left:1085.5px;width:200px;text-align:center;top:498.45px;font-size:9px;color:#222;">B</div>
<div style="left:1146px;top:512px;width:47px;height:39px;border:1px solid #555;"><div style="left:0;top:0;width:45px;height:37px;overflow:hidden;"><div style="left:0px;top:0.00px;width:9px;height:9.3px;background:#ff0000;"></div><div style="left:9px;top:0.00px;width:9px;height:9.3px;background:#ff4000;"></div><div style="left:18px;top:0.00px;width:9px;height:9.3px;background:#ff8000;"></div><div style="left:27px;top:0.00px;width:9px;height:9.3px;background:#ffc000;"></div><div style="left:36px;top:0.00px;width:9px;height:9.3px;background:#ffff00;"></div><div style="left:0px;top:9.25px;width:9px;height:9.3px;background:#00ff00;"></div><div style="left:9px;top:9.25px;width:9px;height:9.3px;background:#00ff40;"></div><div style="left:18px;top:9.25px;width:9px;height:9.3px;background:#00ff80;"></div><div style="left:27px;top:9.25px;width:9px;height:9.3px;background:#00ffc0;"></div><div style="left:36px;top:9.25px;width:9px;height:9.3px;background:#00ffff;"></div><div style="left:0px;top:18.50px;width:9px;height:9.3px;background:#0000ff;"></div><div style="left:9px;top:18.50px;width:9px;height:9.3px;background:#4000ff;"></div><div style="left:18px;top:18.50px;width:9px;height:9.3px;background:#8000ff;"></div><div style="left:27px;top:18.50px;width:9px;height:9.3px;background:#c000ff;"></div><div style="left:36px;top:18.50px;width:9px;height:9.3px;background:#ff00ff;"></div><div style="left:0px;top:27.75px;width:9px;height:9.3px;background:#ffffff;"></div><div style="left:9px;top:27.75px;width:9px;height:9.3px;background:#c0c0c0;"></div><div style="left:18px;top:27.75px;width:9px;height:9.3px;background:#808080;"></div><div style="left:27px;top:27.75px;width:9px;height:9.3px;background:#404040;"></div><div style="left:36px;top:27.75px;width:9px;height:9.3px;background:#000000;"></div></div></div>
<div style="left:1211px;top:426px;width:53px;height:1px;background:#bfe3e6;"></div>
<div style="left:1211px;top:557px;width:53px;height:1px;background:#bfe3e6;"></div>
<div style="left:1206px;top:431px;width:1px;height:121px;background:#bfe3e6;"></div>
<div style="left:1268px;top:431px;width:1px;height:121px;background:#bfe3e6;"></div>
<div style="left:1218px;top:435px;width:38px;height:20px;background:#ff0000;border:2px solid #111;"></div>
<div style="left:1220px;top:466px;width:3px;height:32px;background:#eaf8fa;border:1px solid #2ad4e8;border-radius:1.5px;"></div>
<div style="left:1215.5px;top:467px;width:11px;height:6.5px;background:#dd1111;border:1px solid #2ad4e8;border-radius:1.5px;"></div>
<div class="t" style="left:1121.5px;width:200px;text-align:center;top:498.45px;font-size:9px;color:#222;">R</div>
<div style="left:1236px;top:466px;width:3px;height:32px;background:#eaf8fa;border:1px solid #2ad4e8;border-radius:1.5px;"></div>
<div style="left:1231.5px;top:490px;width:11px;height:6.5px;background:#33cc22;border:1px solid #2ad4e8;border-radius:1.5px;"></div>
<div class="t" style="left:1137.5px;width:200px;text-align:center;top:498.45px;font-size:9px;color:#222;">G</div>
<div style="left:1252px;top:466px;width:3px;height:32px;background:#eaf8fa;border:1px solid #2ad4e8;border-radius:1.5px;"></div>
<div style="left:1247.5px;top:490px;width:11px;height:6.5px;background:#1a88d8;border:1px solid #2ad4e8;border-radius:1.5px;"></div>
<div class="t" style="left:1153.5px;width:200px;text-align:center;top:498.45px;font-size:9px;color:#222;">B</div>
<div style="left:1214px;top:512px;width:47px;height:39px;border:1px solid #2ad4e8;"><div style="left:0;top:0;width:45px;height:37px;overflow:hidden;"><div style="left:0px;top:0.00px;width:9px;height:9.3px;background:#ff0000;"></div><div style="left:9px;top:0.00px;width:9px;height:9.3px;background:#ff4000;"></div><div style="left:18px;top:0.00px;width:9px;height:9.3px;background:#ff8000;"></div><div style="left:27px;top:0.00px;width:9px;height:9.3px;background:#ffc000;"></div><div style="left:36px;top:0.00px;width:9px;height:9.3px;background:#ffff00;"></div><div style="left:0px;top:9.25px;width:9px;height:9.3px;background:#00ff00;"></div><div style="left:9px;top:9.25px;width:9px;height:9.3px;background:#00ff40;"></div><div style="left:18px;top:9.25px;width:9px;height:9.3px;background:#00ff80;"></div><div style="left:27px;top:9.25px;width:9px;height:9.3px;background:#00ffc0;"></div><div style="left:36px;top:9.25px;width:9px;height:9.3px;background:#00ffff;"></div><div style="left:0px;top:18.50px;width:9px;height:9.3px;background:#0000ff;"></div><div style="left:9px;top:18.50px;width:9px;height:9.3px;background:#4000ff;"></div><div style="left:18px;top:18.50px;width:9px;height:9.3px;background:#8000ff;"></div><div style="left:27px;top:18.50px;width:9px;height:9.3px;background:#c000ff;"></div><div style="left:36px;top:18.50px;width:9px;height:9.3px;background:#ff00ff;"></div><div style="left:0px;top:27.75px;width:9px;height:9.3px;background:#ffffff;"></div><div style="left:9px;top:27.75px;width:9px;height:9.3px;background:#c0c0c0;"></div><div style="left:18px;top:27.75px;width:9px;height:9.3px;background:#808080;"></div><div style="left:27px;top:27.75px;width:9px;height:9.3px;background:#404040;"></div><div style="left:36px;top:27.75px;width:9px;height:9.3px;background:#000000;"></div></div></div>
<svg style="position:absolute;left:1279px;top:287px" width="14" height="62" viewBox="0 0 14 62"><rect x="1.5" y="2.5" width="9" height="4.5" fill="#b01010" stroke="#222" stroke-width="0.8"/><path d="M6 6.8 L10.2 12.5 L7.9 12.5 L7.9 17.5 L4.1 17.5 L4.1 12.5 L1.8 12.5 Z" fill="#fff" stroke="#222" stroke-width="0.9"/><rect x="1.8" y="18.5" width="8.4" height="4" fill="#c01010" stroke="#22e0f0" stroke-width="1.1"/><rect x="1.5" y="38.5" width="9" height="4.5" fill="#b01010" stroke="#222" stroke-width="0.8"/><path d="M6 53.2 L10.2 47.5 L7.9 47.5 L7.9 43 L4.1 43 L4.1 47.5 L1.8 47.5 Z" fill="#fff" stroke="#222" stroke-width="0.9"/><rect x="1.8" y="54" width="8.4" height="4" fill="#c01010" stroke="#22e0f0" stroke-width="1.1"/></svg>
<div style="left:1089px;top:523px;width:32px;height:32px;background:#f6e794;"><svg style="position:absolute;left:0px;top:0px" width="32" height="32" viewBox="0 0 32 32"><path d="M7 16 L25 16" stroke="#222" stroke-width="1"/><path d="M5 14 L9 18 M9 14 L5 18 M23 14 L27 18 M27 14 L23 18" stroke="#222" stroke-width="1.2"/></svg></div>
<div style="left:101px;top:570px;width:1px;height:29px;background:#b0b0b0;"></div>
<div style="left:200px;top:570px;width:1px;height:29px;background:#b0b0b0;"></div>
<div style="left:299px;top:570px;width:1px;height:29px;background:#b0b0b0;"></div>
<div style="left:398px;top:570px;width:1px;height:29px;background:#b0b0b0;"></div>
<div style="left:497px;top:571px;width:1.5px;height:28px;background:#444;"></div>
<div style="left:3px;top:571px;width:1px;height:28px;background:#111;"></div>
<div class="t" style="left:1px;width:200px;text-align:center;top:600.12px;font-size:10.5px;color:#6a8080;">00.20</div>
<div class="t" style="left:100px;width:200px;text-align:center;top:600.12px;font-size:10.5px;color:#6a8080;">00.40</div>
<div class="t" style="left:199px;width:200px;text-align:center;top:600.12px;font-size:10.5px;color:#6a8080;">00.60</div>
<div class="t" style="left:298px;width:200px;text-align:center;top:600.12px;font-size:10.5px;color:#6a8080;">00.80</div>
<div class="t" style="left:401px;width:111px;text-align:right;top:599.5px;font-size:10.5px;color:#6a8080;">01.00</div>
<div class="t" style="left:13px;top:551.02px;font-size:12.5px;color:#8c8c8c;">Frame: 1/32</div>
<div class="t" style="left:222px;top:551.02px;font-size:12.5px;color:#8c8c8c;">Scope: All frames</div>
<div class="t" style="left:380px;width:124px;text-align:right;top:550.9px;font-size:12.5px;color:#3c3c4c;">Points: 440</div>
<div style="left:21px;top:651px;width:61px;height:21px;background:#efefef;"><div style="left:4px;top:0;width:53px;height:1px;background:#dadada;"></div><div style="left:4px;top:20px;width:53px;height:1px;background:#dadada;"></div><div style="left:0;top:4px;width:1px;height:13px;background:#dadada;"></div><div style="left:60px;top:4px;width:1px;height:13px;background:#dadada;"></div><svg style="position:absolute;left:0px;top:0px" width="61" height="21" viewBox="0 0 61 21"><path d="M4 4 L18 10.5 L4 17 Z" fill="#22a822" stroke="#1a4a1a" stroke-width="0.8"/><rect x="25" y="4" width="4" height="13" fill="#c8c032" stroke="#444" stroke-width="0.8"/><rect x="31" y="4" width="4" height="13" fill="#c8c032" stroke="#444" stroke-width="0.8"/><rect x="44" y="4" width="13" height="13" fill="#d43434" stroke="#444" stroke-width="0.8"/><path d="M20.5 4 L20.5 17 M40.5 4 L40.5 17" stroke="#dadada" stroke-width="1"/></svg></div>
<div style="left:89px;top:651px;width:44px;height:21px;background:#efefef;"><div style="left:4px;top:0;width:36px;height:1px;background:#dadada;"></div><div style="left:4px;top:20px;width:36px;height:1px;background:#dadada;"></div><div style="left:0;top:4px;width:1px;height:13px;background:#dadada;"></div><div style="left:43px;top:4px;width:1px;height:13px;background:#dadada;"></div><div style="left:22px;top:4px;width:1px;height:13px;background:#d4d4d4;"></div><div style="left:8px;top:9.5px;width:6px;height:2px;background:#111;"></div><div style="left:28px;top:9px;width:11px;height:2.2px;background:#111;"></div><div style="left:32.4px;top:5px;width:2.2px;height:11px;background:#111;"></div></div>
<div class="t" style="left:145px;top:655.52px;font-size:12.5px;color:#6d6d6d;">Speed: 100%</div>
<div style="left:421px;top:631px;width:32px;height:32px;"><div style="left:4px;top:0;width:24px;height:1px;background:#dadada;"></div><div style="left:4px;top:31px;width:24px;height:1px;background:#dadada;"></div><div style="left:0;top:4px;width:1px;height:24px;background:#dadada;"></div><div style="left:31px;top:4px;width:1px;height:24px;background:#dadada;"></div><svg style="position:absolute;left:0px;top:0px" width="32" height="32" viewBox="0 0 32 32"><path d="M15 14 L5 25 M15 14 L10 27 M15 14 L15 27 M15 14 L21 26 M15 14 L25 26" stroke="#222" stroke-width="0.9"/><path d="M15 14 L21 26" stroke="#999" stroke-width="0.9"/><path d="M15 14 L25 26" stroke="#ccc" stroke-width="0.9"/><path d="M15 14 L15 27" stroke="#777" stroke-width="0.9"/><circle cx="15" cy="14" r="1.6" fill="#111"/><rect x="3.5" y="23.5" width="3" height="3" fill="#111"/><circle cx="10" cy="27" r="1.5" fill="#444"/><circle cx="15" cy="27" r="1.5" fill="#777"/><circle cx="21" cy="26" r="1.4" fill="#aaa"/><circle cx="25" cy="26" r="1.4" fill="#ccc"/></svg></div>
<div class="t" style="left:377px;width:120px;text-align:center;top:633.48px;font-size:9.5px;color:#111;transform:scaleX(0.950);-webkit-text-stroke:0.25px #111;">ONION</div>
<div style="left:461px;top:631px;width:32px;height:32px;"><div style="left:4px;top:0;width:24px;height:1px;background:#dadada;"></div><div style="left:4px;top:31px;width:24px;height:1px;background:#dadada;"></div><div style="left:0;top:4px;width:1px;height:24px;background:#dadada;"></div><div style="left:31px;top:4px;width:1px;height:24px;background:#dadada;"></div><svg style="position:absolute;left:0px;top:0px" width="32" height="32" viewBox="0 0 32 32"><rect x="7" y="14" width="17" height="13" fill="#111"/><path d="M7.5 18.5 L23.5 18.5 M7.5 22.5 L23.5 22.5 M11.5 14.5 L11.5 26.5 M15.5 14.5 L15.5 26.5 M19.5 14.5 L19.5 26.5" stroke="#fff" stroke-width="1"/></svg></div>
<div class="t" style="left:416.6px;width:120px;text-align:center;top:633.48px;font-size:9.5px;color:#111;transform:scaleX(0.874);-webkit-text-stroke:0.25px #111;">GRID</div>
<div style="left:21px;top:707px;width:80px;height:32px;"><div style="left:4px;top:0;width:72px;height:1px;background:#dadada;"></div><div style="left:4px;top:31px;width:72px;height:1px;background:#dadada;"></div><div style="left:0;top:4px;width:1px;height:24px;background:#dadada;"></div><div style="left:79px;top:4px;width:1px;height:24px;background:#dadada;"></div><svg style="position:absolute;left:5px;top:4px" width="24" height="26" viewBox="0 0 24 26"><path d="M0.5 1 L22 1" stroke="#333" stroke-width="1.5" stroke-dasharray="1.2 1.8"/><rect x="0.5" y="3.5" width="21" height="18" fill="#c4c4c4" stroke="#111" stroke-width="1"/><path d="M1 9.5 L21 9.5 M1 15.5 L21 15.5" stroke="#111" stroke-width="1"/><rect x="2" y="4" width="11" height="5.5" fill="#333"/><rect x="4" y="6" width="4" height="1.2" fill="#e01010"/><rect x="8" y="10" width="10" height="5.5" fill="#333"/><path d="M10 11 L13 14.5 M13 11 L10 14.5" stroke="#22ee22" stroke-width="1"/><rect x="2" y="16" width="2" height="5" fill="#fff"/></svg></div>
<div class="t" style="left:14px;width:120px;text-align:center;top:713.60px;font-size:10px;color:#111;transform:scaleX(0.860);-webkit-text-stroke:0.25px #111;">TIMELINE</div>
<div class="t" style="left:14.5px;width:120px;text-align:center;top:725.00px;font-size:10px;color:#111;transform:scaleX(0.833);-webkit-text-stroke:0.25px #111;">MODE</div>
<div style="left:121px;top:707px;width:32px;height:32px;"><div style="left:4px;top:0;width:24px;height:1px;background:#dadada;"></div><div style="left:4px;top:31px;width:24px;height:1px;background:#dadada;"></div><div style="left:0;top:4px;width:1px;height:24px;background:#dadada;"></div><div style="left:31px;top:4px;width:1px;height:24px;background:#dadada;"></div></div>
<div class="t" style="left:77px;width:120px;text-align:center;top:709.90px;font-size:10px;color:#111;transform:scaleX(0.790);-webkit-text-stroke:0.25px #111;">HELP</div>
<div class="t" style="left:117px;width:40px;text-align:center;top:719px;font-size:17px;font-weight:bold;color:#111;">?</div>
<div style="left:161px;top:707px;width:32px;height:32px;"><div style="left:4px;top:0;width:24px;height:1px;background:#dadada;"></div><div style="left:4px;top:31px;width:24px;height:1px;background:#dadada;"></div><div style="left:0;top:4px;width:1px;height:24px;background:#dadada;"></div><div style="left:31px;top:4px;width:1px;height:24px;background:#dadada;"></div><svg style="position:absolute;left:0px;top:0px" width="32" height="32" viewBox="0 0 32 32"><g transform="translate(16 20.5)"><path d="" /></g></svg></div>
<svg style="position:absolute;left:161px;top:707px" width="32" height="32" viewBox="0 0 32 32"><polygon points="22.62,18.63 24.99,19.15 24.99,21.85 22.62,22.37 22.15,23.50 23.46,25.55 21.55,27.46 19.50,26.15 18.37,26.62 17.85,28.99 15.15,28.99 14.63,26.62 13.50,26.15 11.45,27.46 9.54,25.55 10.85,23.50 10.38,22.37 8.01,21.85 8.01,19.15 10.38,18.63 10.85,17.50 9.54,15.45 11.45,13.54 13.50,14.85 14.63,14.38 15.15,12.01 17.85,12.01 18.37,14.38 19.50,14.85 21.55,13.54 23.46,15.45 22.15,17.50" fill="#777" stroke="#1a1a1a" stroke-width="1.1" stroke-linejoin="round"/><circle cx="16.5" cy="20.5" r="3.2" fill="#c4c4c4" stroke="#1a1a1a" stroke-width="1.1"/></svg>
<div class="t" style="left:117.30000000000001px;width:120px;text-align:center;top:709.90px;font-size:10px;color:#111;transform:scaleX(0.810);-webkit-text-stroke:0.25px #111;">SETT.</div>
<div style="left:341px;top:707px;width:48px;height:32px;"><div style="left:4px;top:0;width:40px;height:1px;background:#dadada;"></div><div style="left:4px;top:31px;width:40px;height:1px;background:#dadada;"></div><div style="left:0;top:4px;width:1px;height:24px;background:#dadada;"></div><div style="left:47px;top:4px;width:1px;height:24px;background:#dadada;"></div><svg style="position:absolute;left:0px;top:0px" width="48" height="32" viewBox="0 0 48 32"><path d="M4 21.5 L36 21.5" stroke="#ee2020" stroke-width="1.2"/><circle cx="36" cy="21.5" r="3.5" fill="#ff3030"/><path d="M39.0 21.5 L43.5 21.5" stroke="#ff2020" stroke-width="1"/><path d="M38.6 23.0 L42.5 25.2" stroke="#ff2020" stroke-width="1"/><path d="M37.5 24.1 L39.8 28.0" stroke="#ff2020" stroke-width="1"/><path d="M36.0 24.5 L36.0 29.0" stroke="#ff2020" stroke-width="1"/><path d="M34.5 24.1 L32.2 28.0" stroke="#ff2020" stroke-width="1"/><path d="M33.4 23.0 L29.5 25.2" stroke="#ff2020" stroke-width="1"/><path d="M33.0 21.5 L28.5 21.5" stroke="#ff2020" stroke-width="1"/><path d="M33.4 20.0 L29.5 17.8" stroke="#ff2020" stroke-width="1"/><path d="M34.5 18.9 L32.2 15.0" stroke="#ff2020" stroke-width="1"/><path d="M36.0 18.5 L36.0 14.0" stroke="#ff2020" stroke-width="1"/><path d="M37.5 18.9 L39.8 15.0" stroke="#ff2020" stroke-width="1"/><path d="M38.6 20.0 L42.5 17.7" stroke="#ff2020" stroke-width="1"/></svg></div>
<div class="t" style="left:305.3px;width:120px;text-align:center;top:710.80px;font-size:10px;color:#111;transform:scaleX(0.826);-webkit-text-stroke:0.25px #111;">LASER ON</div>
<div style="left:421px;top:707px;width:32px;height:32px;"><div style="left:4px;top:0;width:24px;height:1px;background:#dadada;"></div><div style="left:4px;top:31px;width:24px;height:1px;background:#dadada;"></div><div style="left:0;top:4px;width:1px;height:24px;background:#dadada;"></div><div style="left:31px;top:4px;width:1px;height:24px;background:#dadada;"></div><svg style="position:absolute;left:0px;top:0px" width="32" height="32" viewBox="0 0 32 32"><rect x="0.5" y="17.5" width="31" height="10" fill="#c4c4c4"/><path d="M0 17.5 L32 17.5 M0 27.5 L32 27.5" stroke="#222" stroke-width="1"/><rect x="8.5" y="17.5" width="15" height="10" fill="#f8e000" stroke="#222" stroke-width="1"/><path d="M10.5 22.5 L21.5 22.5" stroke="#111" stroke-width="1"/><path d="M10 22.5 L13 20.5 L13 24.5 Z M22 22.5 L19 20.5 L19 24.5 Z" fill="#111"/></svg></div>
<div class="t" style="left:377.5px;width:120px;text-align:center;top:710.40px;font-size:10px;color:#111;transform:scaleX(0.789);-webkit-text-stroke:0.25px #111;">SCOPE</div>
<div style="left:461px;top:707px;width:32px;height:32px;"><div style="left:4px;top:0;width:24px;height:1px;background:#dadada;"></div><div style="left:4px;top:31px;width:24px;height:1px;background:#dadada;"></div><div style="left:0;top:4px;width:1px;height:24px;background:#dadada;"></div><div style="left:31px;top:4px;width:1px;height:24px;background:#dadada;"></div><svg style="position:absolute;left:0px;top:0px" width="32" height="32" viewBox="0 0 32 32"><path d="M11.8 24.5 L11.8 16.2 C11.8 15 13.8 15 13.8 16.2 L13.8 19.2 L15.3 18.6 L16.6 19.3 L18 19 C19.6 19.4 20.3 21 20.3 22.5 L20.3 23.8 C20.3 25.2 19.2 25.8 18 25.8 L13.8 25.8 C12.8 25.8 11.8 25.4 11.8 24.5 Z" fill="#fff" stroke="#111" stroke-width="1"/></svg></div>
<div class="t" style="left:417px;width:120px;text-align:center;top:710.40px;font-size:10px;color:#111;transform:scaleX(0.755);-webkit-text-stroke:0.25px #111;">SELECT</div>
<div style="left:533px;top:615px;width:76px;height:32px;"><div style="left:4px;top:0;width:68px;height:1px;background:#dadada;"></div><div style="left:4px;top:31px;width:68px;height:1px;background:#dadada;"></div><div style="left:0;top:4px;width:1px;height:24px;background:#dadada;"></div><div style="left:75px;top:4px;width:1px;height:24px;background:#dadada;"></div><svg style="position:absolute;left:0px;top:0px" width="30" height="32" viewBox="0 0 30 32"><rect x="6" y="8.5" width="2.2" height="15" fill="#111"/><path d="M9 16 L16 16" stroke="#111" stroke-width="1.2"/><path d="M17 16 L14 14 L14 18 Z" fill="#111"/><rect x="19" y="9" width="3" height="3" fill="#111"/><rect x="19" y="15" width="3" height="3" fill="#111"/><rect x="19" y="21" width="3" height="3" fill="#111"/></svg></div>
<div class="t" style="left:523px;width:120px;text-align:center;top:621.80px;font-size:10px;color:#111;transform:scaleX(0.780);-webkit-text-stroke:0.25px #111;">REAPPLY</div>
<div class="t" style="left:522.5px;width:120px;text-align:center;top:632.20px;font-size:10px;color:#111;transform:scaleX(0.860);-webkit-text-stroke:0.25px #111;">BLANKING</div>
<div style="left:533px;top:655px;width:76px;height:32px;"><div style="left:4px;top:0;width:68px;height:1px;background:#dadada;"></div><div style="left:4px;top:31px;width:68px;height:1px;background:#dadada;"></div><div style="left:0;top:4px;width:1px;height:24px;background:#dadada;"></div><div style="left:75px;top:4px;width:1px;height:24px;background:#dadada;"></div><svg style="position:absolute;left:0px;top:0px" width="30" height="32" viewBox="0 0 30 32"><rect x="6" y="8.5" width="2.2" height="15" fill="#ee1111"/><path d="M9 16 L16 16" stroke="#111" stroke-width="1.2"/><path d="M17 16 L14 14 L14 18 Z" fill="#111"/><rect x="18" y="8.5" width="2.2" height="15" fill="#11bb11"/></svg></div>
<div class="t" style="left:523px;width:120px;text-align:center;top:661.80px;font-size:10px;color:#111;transform:scaleX(0.780);-webkit-text-stroke:0.25px #111;">REAPPLY</div>
<div class="t" style="left:523.5px;width:120px;text-align:center;top:672.20px;font-size:10px;color:#111;transform:scaleX(0.817);-webkit-text-stroke:0.25px #111;">COLORS</div>
<div class="t" style="left:622px;top:616.1px;font-size:8.5px;color:#111;transform:scaleX(0.85);transform-origin:0 0;">OLD</div>
<div class="t" style="left:646.5px;top:616.1px;font-size:8.5px;color:#111;transform:scaleX(0.85);transform-origin:0 0;">NEW</div>
<div class="t" style="left:672.5px;top:616.1px;font-size:8.5px;color:#111;transform:scaleX(0.85);transform-origin:0 0;">RESULT</div>
<div class="t" style="left:622px;top:656.1px;font-size:8.5px;color:#111;transform:scaleX(0.85);transform-origin:0 0;">OLD</div>
<div class="t" style="left:646.5px;top:656.1px;font-size:8.5px;color:#111;transform:scaleX(0.85);transform-origin:0 0;">NEW</div>
<div class="t" style="left:672.5px;top:656.1px;font-size:8.5px;color:#111;transform:scaleX(0.85);transform-origin:0 0;">RESULT</div>
<div style="left:619px;top:625px;width:83px;height:9px;background:#000;"><svg style="position:absolute;left:0px;top:0px" width="83" height="9" viewBox="0 0 83 9"><rect x="3" y="3" width="5" height="3" fill="#fff"/><rect x="14" y="3" width="5" height="3" fill="#fff"/><path d="M22 4.5 L27 4.5 M24.5 2 L24.5 7" stroke="#fff" stroke-width="1"/><rect x="28.0" y="2.5" width="1.2" height="4" fill="#fff"/><rect x="30.2" y="2.5" width="1.2" height="4" fill="#fff"/><rect x="32.4" y="2.5" width="1.2" height="4" fill="#fff"/><rect x="34.6" y="2.5" width="1.2" height="4" fill="#fff"/><rect x="36.8" y="2.5" width="1.2" height="4" fill="#fff"/><rect x="39.0" y="2.5" width="1.2" height="4" fill="#fff"/><rect x="41.2" y="2.5" width="1.2" height="4" fill="#fff"/><path d="M47 3.2 L52 3.2 M47 5.8 L52 5.8" stroke="#fff" stroke-width="1"/><rect x="56" y="2.5" width="1.2" height="4" fill="#fff"/><rect x="58.2" y="2.5" width="1.2" height="4" fill="#fff"/><rect x="60.4" y="2.5" width="1.2" height="4" fill="#fff"/><rect x="65" y="2.5" width="1.2" height="4" fill="#fff"/><rect x="67.2" y="2.5" width="1.2" height="4" fill="#fff"/><rect x="69.4" y="2.5" width="1.2" height="4" fill="#fff"/></svg></div>
<div style="left:619px;top:665px;width:83px;height:9px;background:#000;"><svg style="position:absolute;left:0px;top:0px" width="83" height="9" viewBox="0 0 83 9"><rect x="4" y="1.5" width="14" height="6" fill="#ee1111"/><path d="M21 4.5 L26 4.5 M23.5 2 L23.5 7" stroke="#fff" stroke-width="1"/><rect x="29" y="1.5" width="14" height="6" fill="#00ee00"/><path d="M47 3.2 L52 3.2 M47 5.8 L52 5.8" stroke="#fff" stroke-width="1"/><rect x="56.5" y="1.5" width="14.5" height="6" fill="#00ee00"/></svg></div>
<div class="t" style="left:623px;top:637.05px;font-size:9px;color:#333;">Mode: AND</div>
<div class="t" style="left:623px;top:677.05px;font-size:9px;color:#333;">Mode: Replace</div>
<div style="left:873px;top:611px;width:16px;height:16px;background:#f6e691;border:1px solid #555;"><svg style="position:absolute;left:0px;top:-1px" width="16" height="16" viewBox="0 0 16 16"><path d="M3 7.5 L6.5 11 L13 4" stroke="#333" stroke-width="2.4" fill="none"/></svg></div>
<div style="left:941px;top:611px;width:16px;height:16px;border:1px solid #444;"></div>
<div class="t" style="left:781.5px;width:200px;text-align:center;top:632.52px;font-size:12.5px;color:#707070;">Enabled</div>
<div class="t" style="left:849px;width:200px;text-align:center;top:632.52px;font-size:12.5px;color:#a8a8a8;">Current</div>
<div class="t" style="left:849px;width:200px;text-align:center;top:647.02px;font-size:12.5px;color:#a8a8a8;">frame only</div>
<div style="left:1058px;top:635px;width:31px;height:32px;"><div style="left:4px;top:0;width:23px;height:1px;background:#dadada;"></div><div style="left:4px;top:31px;width:23px;height:1px;background:#dadada;"></div><div style="left:0;top:4px;width:1px;height:24px;background:#dadada;"></div><div style="left:30px;top:4px;width:1px;height:24px;background:#dadada;"></div><svg style="position:absolute;left:0px;top:0px" width="31" height="32" viewBox="0 0 31 32"><rect x="6" y="15" width="2.2" height="12" fill="#111"/><rect x="15" y="15" width="0.8" height="12" fill="#222"/><rect x="17" y="14" width="0.8" height="14" fill="#222"/><rect x="19" y="15" width="1.6" height="12" fill="#222"/><rect x="22" y="14" width="0.8" height="14" fill="#222"/><rect x="24" y="15" width="0.8" height="12" fill="#222"/></svg></div>
<div class="t" style="left:1013px;width:120px;text-align:center;top:637.20px;font-size:10px;color:#111;transform:scaleX(0.860);-webkit-text-stroke:0.25px #111;">SHAKE</div>
<div style="left:1058px;top:675px;width:31px;height:32px;"><div style="left:4px;top:0;width:23px;height:1px;background:#dadada;"></div><div style="left:4px;top:31px;width:23px;height:1px;background:#dadada;"></div><div style="left:0;top:4px;width:1px;height:24px;background:#dadada;"></div><div style="left:30px;top:4px;width:1px;height:24px;background:#dadada;"></div><svg style="position:absolute;left:0px;top:0px" width="31" height="32" viewBox="0 0 31 32"><path d="M5 6 L25 26 M25 6 L5 26" stroke="#e88a8a" stroke-width="2"/><path d="M4 20 L22 15" stroke="#111" stroke-width="1.6"/><path d="M26 14 L19 12 L21 18.5 Z" fill="#111"/></svg></div>
<div style="left:865px;top:687px;width:45px;height:21px;background:#efefef;"><div style="left:4px;top:0;width:37px;height:1px;background:#dadada;"></div><div style="left:4px;top:20px;width:37px;height:1px;background:#dadada;"></div><div style="left:0;top:4px;width:1px;height:13px;background:#dadada;"></div><div style="left:44px;top:4px;width:1px;height:13px;background:#dadada;"></div><div style="left:22px;top:4px;width:1px;height:13px;background:#d4d4d4;"></div><div style="left:8px;top:9.5px;width:6px;height:2px;background:#111;"></div><div style="left:28px;top:9px;width:11px;height:2.2px;background:#111;"></div><div style="left:32.4px;top:5px;width:2.2px;height:11px;background:#111;"></div></div>
<div class="t" style="left:926px;top:691.52px;font-size:12.5px;color:#6d6d6d;">Repeat: 1</div>
<div style="left:865px;top:717px;width:225px;height:22px;"></div>
<div style="left:865px;top:717px;width:225px;height:22px;background:#efefef;"><div style="left:4px;top:0;width:217px;height:1px;background:#dadada;"></div><div style="left:4px;top:21px;width:217px;height:1px;background:#dadada;"></div><div style="left:0;top:4px;width:1px;height:14px;background:#dadada;"></div><div style="left:224px;top:4px;width:1px;height:14px;background:#dadada;"></div></div>
<div style="left:865px;top:717px;width:33px;height:22px;background:#f6e794;"></div>
<div style="left:929.5px;top:720px;width:1px;height:16px;background:#d8d8d8;"></div>
<div style="left:962px;top:720px;width:1px;height:16px;background:#d8d8d8;"></div>
<div style="left:994.5px;top:720px;width:1px;height:16px;background:#d8d8d8;"></div>
<div style="left:1026.5px;top:720px;width:1px;height:16px;background:#d8d8d8;"></div>
<div style="left:1057.5px;top:720px;width:1px;height:16px;background:#d8d8d8;"></div>
<svg style="position:absolute;left:0;top:0" width="1304" height="761"><g stroke="#222" stroke-width="1.3" fill="none"><path d="M870.8 733.8 L889.7 721.2" /><path d="M901.8 733.8 L913.5 721.2 L924.9 733.8" /><path d="M937.1 734.7 C937.5 726 943 721.5 952.8 721.6" /><path d="M971.2 734.4 C980 733 985 728 985.8 721.2" /><path d="M1000.2 734.2 C1010 734.5 1007.5 722 1019.5 721.6" /><path d="M1030.8 734.7 C1036 733 1036.5 721.6 1042 721.6 C1047.5 721.6 1047 733.5 1052.8 733.5" /><path d="M1066 734.7 L1066 728 C1066 719.5 1080.8 719.5 1080.8 728 L1080.8 734.7" /></g></svg>
<div style="left:1141px;top:611px;width:80px;height:32px;"><div style="left:4px;top:0;width:72px;height:1px;background:#dadada;"></div><div style="left:4px;top:31px;width:72px;height:1px;background:#dadada;"></div><div style="left:0;top:4px;width:1px;height:24px;background:#dadada;"></div><div style="left:79px;top:4px;width:1px;height:24px;background:#dadada;"></div><svg style="position:absolute;left:4px;top:3px" width="30" height="26" viewBox="0 0 30 26"><rect x="0.5" y="3.5" width="21" height="18" fill="#c4c4c4" stroke="#111" stroke-width="1"/><path d="M1 9.5 L21 9.5 M1 15.5 L21 15.5" stroke="#111" stroke-width="1"/><rect x="2" y="4" width="11" height="5.5" fill="#333"/><rect x="4" y="6" width="4" height="1.2" fill="#e01010"/><rect x="8" y="10" width="10" height="5.5" fill="#333"/><path d="M10 11 L13 14.5 M13 11 L10 14.5" stroke="#22ee22" stroke-width="1"/><rect x="2" y="16" width="2" height="5" fill="#fff"/><path d="M18 16 L23 22 L21 22.5 L23.5 25 L22 25.5 L20 23 L18.5 24.5 Z" fill="#f8e000" stroke="#222" stroke-width="0.7"/></svg></div>
<div class="t" style="left:1135.7px;width:120px;text-align:center;top:617.70px;font-size:10px;color:#111;transform:scaleX(0.860);-webkit-text-stroke:0.25px #111;">SEND TO</div>
<div class="t" style="left:1135.5px;width:120px;text-align:center;top:628.30px;font-size:10px;color:#111;transform:scaleX(0.860);-webkit-text-stroke:0.25px #111;">TIMELINE</div>
<div style="left:1141px;top:667px;width:64px;height:32px;"><div style="left:4px;top:0;width:56px;height:1px;background:#dadada;"></div><div style="left:4px;top:31px;width:56px;height:1px;background:#dadada;"></div><div style="left:0;top:4px;width:1px;height:24px;background:#dadada;"></div><div style="left:63px;top:4px;width:1px;height:24px;background:#dadada;"></div><svg style="position:absolute;left:4px;top:3px" width="24" height="26" viewBox="0 0 24 26"><path d="M1.5 9 L1.5 21.5 L14.5 21.5 L19 11.5 L6 11.5 L2 21" fill="#fff" stroke="#222" stroke-width="1"/><path d="M1.5 9 L6 9 L7 7.5 L12 7.5 L12 11.5" fill="none" stroke="#222" stroke-width="1"/><path d="M10 11 C11 7 14 5.5 17 5.5 L17 3 L22 7 L17 11 L17 8.5 C14 8.5 12 9.5 10 11 Z" fill="#f8e000" stroke="#222" stroke-width="0.8"/></svg></div>
<div class="t" style="left:1123px;width:120px;text-align:center;top:674.00px;font-size:10px;color:#111;transform:scaleX(0.860);-webkit-text-stroke:0.25px #111;">LOAD</div>
<div class="t" style="left:1123px;width:120px;text-align:center;top:683.50px;font-size:10px;color:#111;transform:scaleX(0.860);-webkit-text-stroke:0.25px #111;">FRAMES</div>
<div style="left:1213px;top:667px;width:64px;height:32px;"><div style="left:4px;top:0;width:56px;height:1px;background:#dadada;"></div><div style="left:4px;top:31px;width:56px;height:1px;background:#dadada;"></div><div style="left:0;top:4px;width:1px;height:24px;background:#dadada;"></div><div style="left:63px;top:4px;width:1px;height:24px;background:#dadada;"></div><svg style="position:absolute;left:4px;top:3px" width="24" height="26" viewBox="0 0 24 26"><path d="M1.5 9 L1.5 21.5 L14.5 21.5 L19 11.5 L6 11.5 L2 21" fill="#fff" stroke="#222" stroke-width="1"/><path d="M1.5 9 L6 9 L7 7.5 L12 7.5 L12 11.5" fill="none" stroke="#222" stroke-width="1"/><path d="M10 11 C11 7 14 5.5 17 5.5 L17 3 L22 7 L17 11 L17 8.5 C14 8.5 12 9.5 10 11 Z" fill="#f8e000" stroke="#222" stroke-width="0.8"/><circle cx="4.0" cy="22.0" r="2.6" fill="#ff0000"/><circle cx="5.4" cy="21.4" r="2.6" fill="#ff8000"/><circle cx="6.8" cy="20.8" r="2.6" fill="#ffee00"/><circle cx="8.2" cy="20.2" r="2.6" fill="#00dd00"/><circle cx="9.6" cy="19.6" r="2.6" fill="#0080ff"/><circle cx="11.0" cy="19.0" r="2.6" fill="#8000ff"/></svg></div>
<div class="t" style="left:1195.5px;width:120px;text-align:center;top:674.00px;font-size:10px;color:#111;transform:scaleX(0.860);-webkit-text-stroke:0.25px #111;">IMPORT</div>
<div class="t" style="left:1196px;width:120px;text-align:center;top:683.50px;font-size:10px;color:#111;transform:scaleX(0.860);-webkit-text-stroke:0.25px #111;">ILDA</div>
<div style="left:1141px;top:707px;width:64px;height:32px;"><div style="left:4px;top:0;width:56px;height:1px;background:#dadada;"></div><div style="left:4px;top:31px;width:56px;height:1px;background:#dadada;"></div><div style="left:0;top:4px;width:1px;height:24px;background:#dadada;"></div><div style="left:63px;top:4px;width:1px;height:24px;background:#dadada;"></div><svg style="position:absolute;left:5px;top:9px" width="16" height="16" viewBox="0 0 16 16"><path d="M1.5 1.5 L10.5 1.5 L13.5 4.5 L13.5 14.5 L1.5 14.5 Z" fill="#fff" stroke="#222" stroke-width="1"/><rect x="4" y="2" width="5" height="3" fill="none" stroke="#222" stroke-width="0.8"/><rect x="3.5" y="8.5" width="8" height="5" fill="none" stroke="#222" stroke-width="0.8"/><path d="M4 10.5 L11 10.5" stroke="#222" stroke-width="0.6"/></svg></div>
<div class="t" style="left:1121px;width:120px;text-align:center;top:713.90px;font-size:10px;color:#111;transform:scaleX(0.860);-webkit-text-stroke:0.25px #111;">SAVE</div>
<div class="t" style="left:1121px;width:120px;text-align:center;top:723.10px;font-size:10px;color:#111;transform:scaleX(0.860);-webkit-text-stroke:0.25px #111;">FRAMES</div>
<div style="left:1213px;top:707px;width:64px;height:32px;"><div style="left:4px;top:0;width:56px;height:1px;background:#dadada;"></div><div style="left:4px;top:31px;width:56px;height:1px;background:#dadada;"></div><div style="left:0;top:4px;width:1px;height:24px;background:#dadada;"></div><div style="left:63px;top:4px;width:1px;height:24px;background:#dadada;"></div><svg style="position:absolute;left:2px;top:4px" width="24" height="26" viewBox="0 0 24 26"><g transform="translate(7 5)"><path d="M1.5 1.5 L10.5 1.5 L13.5 4.5 L13.5 14.5 L1.5 14.5 Z" fill="#fff" stroke="#222" stroke-width="1"/><rect x="4" y="2" width="5" height="3" fill="none" stroke="#222" stroke-width="0.8"/><rect x="3.5" y="8.5" width="8" height="5" fill="none" stroke="#222" stroke-width="0.8"/><path d="M4 10.5 L11 10.5" stroke="#222" stroke-width="0.6"/></g><circle cx="4.0" cy="23.0" r="2.6" fill="#ff0000"/><circle cx="5.4" cy="21.4" r="2.6" fill="#ff8000"/><circle cx="6.8" cy="20.8" r="2.6" fill="#ffee00"/><circle cx="8.2" cy="20.2" r="2.6" fill="#00dd00"/><circle cx="9.6" cy="19.6" r="2.6" fill="#0080ff"/><circle cx="11.0" cy="19.0" r="2.6" fill="#8000ff"/></svg></div>
<div class="t" style="left:1193.5px;width:120px;text-align:center;top:713.00px;font-size:10px;color:#111;transform:scaleX(0.818);-webkit-text-stroke:0.25px #111;">EXPORT</div>
<div class="t" style="left:1192px;width:120px;text-align:center;top:723.10px;font-size:10px;color:#111;transform:scaleX(0.860);-webkit-text-stroke:0.25px #111;">ILDA</div>
<svg style="position:absolute;left:1212px;top:234px" width="12" height="12" viewBox="0 0 12 12"><path d="M0.5 0.5 L0.5 9 L3 7 L7.5 7 Z" fill="#fff" stroke="#111" stroke-width="1"/></svg>
</body></html>
